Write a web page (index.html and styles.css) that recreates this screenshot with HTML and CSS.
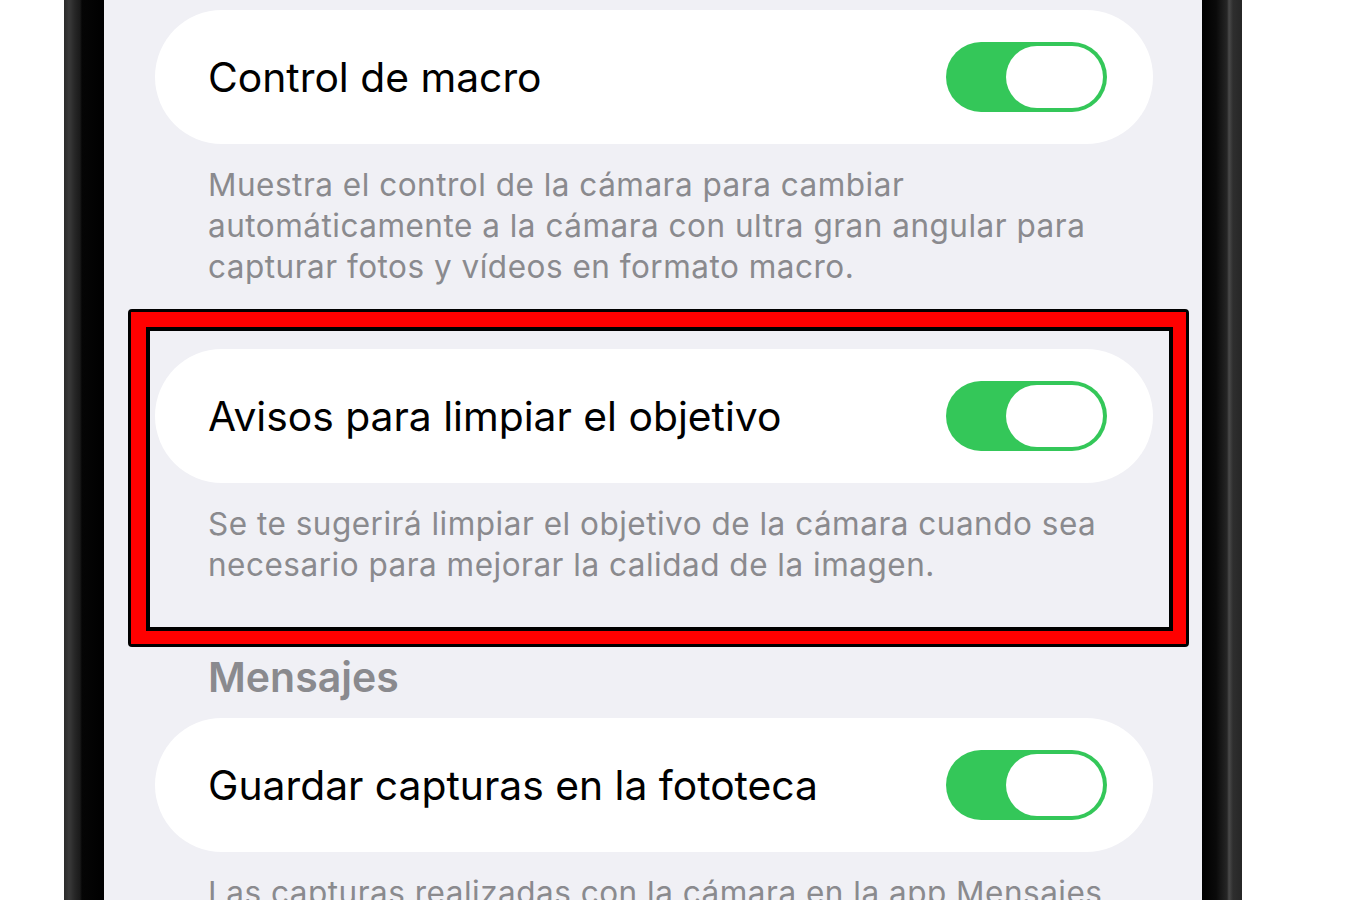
FILE: index.html
```html
<!DOCTYPE html>
<html lang="es">
<head>
    <meta charset="UTF-8">
    <meta name="viewport" content="width=device-width, initial-scale=1.0">
    <title>Ajustes de Cámara</title>
    <link rel="stylesheet" href="styles.css">
</head>
<body>

<div class="phone">
  <div class="bezel bezel-left"></div>

  <div class="screen">

    <div class="row">
      <span class="row-label">Control de macro</span>
      <div class="switch on"><div class="knob"></div></div>
    </div>
    <div class="footer">
      Muestra el control de la cámara para cambiar automáticamente a la cámara con ultra gran angular para capturar fotos y vídeos en formato macro.
    </div>

    <div class="row row-gap">
      <span class="row-label">Avisos para limpiar el objetivo</span>
      <div class="switch on"><div class="knob"></div></div>
    </div>
    <div class="footer">
      Se te sugerirá limpiar el objetivo de la cámara cuando sea necesario para mejorar la calidad de la imagen.
    </div>

    <div class="section-title">Mensajes</div>

    <div class="row">
      <span class="row-label">Guardar capturas en la fototeca</span>
      <div class="switch on"><div class="knob"></div></div>
    </div>
    <div class="footer">
      Las capturas realizadas con la cámara en la app Mensajes se guardarán en la fototeca.
    </div>

    <!-- highlight frame drawn over the lens-cleaning setting -->
    <div class="highlight"></div>
  </div>

  <div class="bezel bezel-right"></div>
</div>

</body>
</html>
```

FILE: styles.css
```css
body{
  margin:0;
  background-color:white;
  font-family:"Inter","Liberation Sans",sans-serif;
  overflow:hidden;
  height:900px;
}

.phone{
  display:flex;
  height:900px;
  padding-left:64px;
}

/* side of the phone body: metal rim + black glass edge */
.bezel{
  width:40px;
  flex-shrink:0;
}
.bezel-left{
  background:linear-gradient(to right,#2b2b2b 0px,#3a3a3a 5px,#262626 11px,#1a1a1a 16px,#050505 18px,#000 40px);
}
.bezel-right{
  background:linear-gradient(to right,#000 0px,#0a0a0a 14px,#262626 25px,#4a4a4a 27px,#2e2e2e 31px,#262626 40px);
}

.screen{
  position:relative;
  width:1098px;
  height:900px;
  overflow:hidden;
  background-color:#f0f0f5;
  padding:10px 49px 0 51px;
  box-sizing:border-box;
}

.row{
  display:flex;
  align-items:center;
  justify-content:space-between;
  height:134px;
  padding:0 46px 0 53px;
  background-color:white;
  border-radius:67px;
}
.row-gap{
  margin-top:62px;
}

.row-label{
  font-size:40.8px;
  color:#000;
}

.switch{
  width:161px;
  height:70px;
  border-radius:35px;
  background-color:#d9d9de;
  display:flex;
  align-items:center;
  padding:0 4px;
  box-sizing:border-box;
}
.switch.on{
  background-color:#34c759;
  justify-content:flex-end;
}
.knob{
  width:97px;
  height:62px;
  border-radius:31px;
  background-color:white;
}

.footer{
  padding:20px 40px 0 53px;
  font-size:31.5px;
  letter-spacing:0.5px;
  line-height:41px;
  color:#8a8a8e;
}

.section-title{
  margin-top:69px;
  padding-left:53px;
  font-size:41px;
  font-weight:600;
  color:#8a8a8e;
  line-height:46px;
  margin-bottom:18px;
}

.highlight{
  position:absolute;
  left:24px;
  top:309px;
  width:1061px;
  height:338px;
  border:3px solid #000;
  border-radius:4px;
  box-sizing:border-box;
  pointer-events:none;
}
.highlight::after{
  content:"";
  position:absolute;
  inset:0;
  border:15px solid #ff0000;
  border-right-width:13px;
  border-bottom-width:13px;
  box-shadow:inset 0 0 0 4px #000;
}
```
